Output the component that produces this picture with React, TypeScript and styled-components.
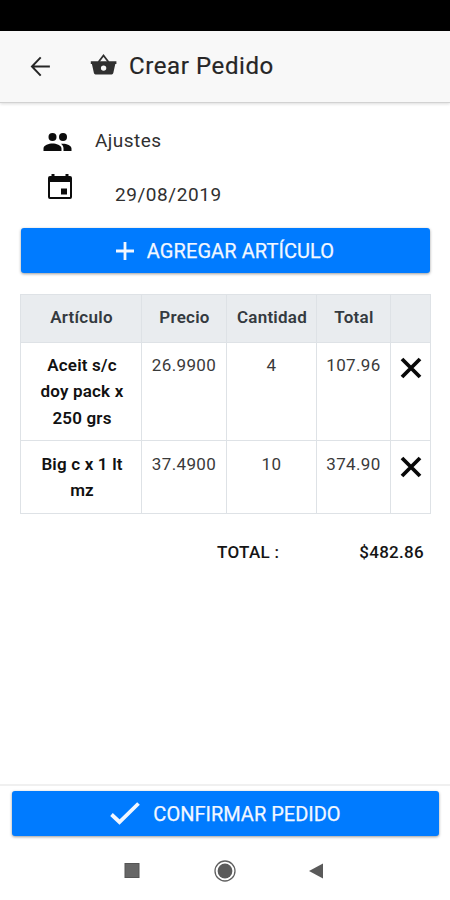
import React from "react";
import styled, { createGlobalStyle } from "styled-components";

const GlobalStyle = createGlobalStyle`
  *, *::before, *::after { box-sizing: border-box; }
  body { margin: 0; background: #fff; font-family: Roboto, "Liberation Sans", sans-serif; color: #1c1c1c; }
`;

const Screen = styled.div`
  display: flex;
  flex-direction: column;
  width: 450px;
  height: 900px;
  background: #fff;
  overflow: hidden;
`;

const StatusBar = styled.div`
  flex: none;
  height: 31px;
  background: #000;
`;

const Header = styled.header`
  flex: none;
  display: flex;
  align-items: center;
  height: 72px;
  padding: 0 0 1px 28px;
  background: #f8f8f8;
  border-bottom: 1px solid #d2d2d2;
  box-shadow: 0 1px 3px rgba(0, 0, 0, 0.14);
`;

const Title = styled.h1`
  margin: 0 0 0 11px;
  font-size: 24px;
  line-height: 30px;
  font-weight: 400;
  letter-spacing: 0.6px;
  color: #262626;
  -webkit-text-stroke: 0.2px #262626;
`;

const Icon = styled.svg<{ $gap?: number }>`
  display: block;
  flex: none;
  margin-left: ${(p) => p.$gap ?? 0}px;
`;

const Content = styled.main`
  flex: 1;
  padding: 22px 19px 0 20px;
`;

const Field = styled.div<{ $indent: number; $height: number }>`
  display: flex;
  align-items: flex-start;
  height: ${(p) => p.$height}px;
  padding-left: ${(p) => p.$indent}px;
`;

const FieldText = styled.span<{ $left: number; $top: number; $spacing: number }>`
  margin: ${(p) => p.$top}px 0 0 ${(p) => p.$left}px;
  font-size: 19px;
  line-height: 24px;
  letter-spacing: ${(p) => p.$spacing}px;
  color: #303030;
`;

const Button = styled.button`
  display: flex;
  align-items: center;
  justify-content: center;
  width: 100%;
  height: 45px;
  padding: 0;
  border: 0;
  border-radius: 3px;
  background: #007bff;
  color: #f2f7ff;
  font: 400 20px/24px Roboto, "Liberation Sans", sans-serif;
  -webkit-text-stroke: 0.25px #f2f7ff;
  box-shadow: 0 1px 3px rgba(0, 0, 0, 0.4);
`;

const AddButton = styled(Button)`
  width: 409px;
  margin-left: 1px;
  padding-right: 1px;
`;

const ButtonLabel = styled.span<{ $spacing: number }>`
  margin-left: 13px;
  letter-spacing: ${(p) => p.$spacing}px;
`;

const Table = styled.table`
  width: 411px;
  margin-top: 21px;
  table-layout: fixed;
  border-collapse: collapse;
  font-size: 17px;
  line-height: 26.4px;
  text-align: center;
`;

const Col = styled.col<{ $width: number }>`
  width: ${(p) => p.$width}px;
`;

const HeadCell = styled.th`
  height: 48px;
  padding: 0 0 2px 1px;
  border: 1px solid #dee2e6;
  background: #e9ecef;
  color: #343a40;
  font-weight: 600;
  letter-spacing: 0.25px;
`;

const Row = styled.tr<{ $height: number }>`
  height: ${(p) => p.$height}px;

  &:last-child > td {
    padding-top: 10px;
  }
`;

const Cell = styled.td`
  padding: 9px 0 0;
  border: 1px solid #dee2e6;
  vertical-align: top;
  letter-spacing: 0.35px;
  color: #3a3a3a;
`;

const NameCell = styled(Cell)`
  padding: 9px 11px 0 13px;
  color: #111;
  font-weight: 600;
  letter-spacing: 0.18px;
`;

const DeleteButton = styled.button`
  display: block;
  margin: 5px auto 0;
  padding: 0;
  border: 0;
  background: none;
`;

const Summary = styled.div`
  display: flex;
  justify-content: space-between;
  margin-top: 25px;
  padding: 0 7px 0 197px;
  font-size: 17px;
  line-height: 26px;
  font-weight: 500;
  color: #151515;
`;

const SummaryLabel = styled.span`
  letter-spacing: 0.3px;
`;

const Amount = styled.span`
  letter-spacing: 0.3px;
`;

const Footer = styled.footer`
  flex: none;
  height: 58px;
  padding: 5px 11px 0 12px;
  border-top: 2px solid #f0f0f0;
`;

const NavBar = styled.nav`
  flex: none;
  display: flex;
  justify-content: center;
  align-items: center;
  height: 58px;
  gap: 69px;
`;

const items = [
  { name: "Aceit s/c doy pack x 250 grs", price: "26.9900", qty: 4, total: "107.96", height: 98 },
  { name: "Big c x 1 lt mz", price: "37.4900", qty: 10, total: "374.90", height: 73 },
];

export default function App() {
  return (
    <>
      <GlobalStyle />
      <Screen>
        <StatusBar />
        <Header>
          <Icon width="25" height="25" viewBox="0 0 24 24" fill="none" stroke="#262626" strokeWidth="1.9">
            <path d="M21 12H4M12.2 3.2 3.8 12l8.4 8.8" />
          </Icon>
          <Icon $gap={37} width="28" height="26" viewBox="0 0 28 26">
            <path d="m8.5 9 5-6.5 5 6.5" fill="none" stroke="#303030" strokeWidth="1.8" />
            <path fill="#303030" fillRule="evenodd" d="M.8 8.3h25.600v2.800h-1.100l-2 9q-.3 1.300-1.600 1.300H5.500q-1.300 0-1.600-1.300l-2-9H.8zM13.600 12.400a2.700 2.700 0 1 0 0 5.400a2.700 2.700 0 1 0 0-5.400z" />
          </Icon>
          <Title>Crear Pedido</Title>
        </Header>
        <Content>
          <Field $indent={23} $height={49}>
            <Icon width="29" height="34" viewBox="0 0 29 34" fill="#0c0c0c">
              <circle cx="9.5" cy="12" r="4" />
              <circle cx="20" cy="12" r="4" />
              <path d="M.5 26v-2.500c0-3.300 5.500-5 9-5s9 1.700 9 5V26zM20.500 26v-2.500c0-2-1-3.500-2.500-4.700 4-.7 10.500 1 10.500 4.700V26z" />
            </Icon>
            <FieldText $left={23} $top={4} $spacing={0.45}>Ajustes</FieldText>
          </Field>
          <Field $indent={27} $height={54}>
            <Icon width="26" height="27" viewBox="0 0 26 27">
              <path fill="#0c0c0c" fillRule="evenodd" d="M4.500 0h3v2h11V0h3v2H23q2 0 2 2v19q0 2-2 2H3q-2 0-2-2V4q0-2 2-2h1.500zM3 8v15h20V8zM14 14.500h6v6h-6z" />
            </Icon>
            <FieldText $left={42} $top={9} $spacing={0.55}>29/08/2019</FieldText>
          </Field>
          <AddButton>
            <Icon width="18" height="18" viewBox="0 0 18 18" stroke="#f2f7ff" strokeWidth="2.8">
              <path d="M0 9h18M9 0v18" />
            </Icon>
            <ButtonLabel $spacing={0.08}>AGREGAR ARTÍCULO</ButtonLabel>
          </AddButton>
          <Table>
            <colgroup>
              <Col $width={121} />
              <Col $width={85} />
              <Col $width={90} />
              <Col $width={74} />
              <Col $width={40} />
            </colgroup>
            <thead>
              <tr>
                <HeadCell>Artículo</HeadCell>
                <HeadCell>Precio</HeadCell>
                <HeadCell>Cantidad</HeadCell>
                <HeadCell>Total</HeadCell>
                <HeadCell />
              </tr>
            </thead>
            <tbody>
              {items.map((item) => (
                <Row key={item.name} $height={item.height}>
                  <NameCell>{item.name}</NameCell>
                  <Cell>{item.price}</Cell>
                  <Cell>{item.qty}</Cell>
                  <Cell>{item.total}</Cell>
                  <Cell>
                    <DeleteButton aria-label="Eliminar">
                      <Icon width="22" height="22" viewBox="0 0 22 22" stroke="#080808" strokeWidth="3.8">
                        <path d="m2 2 18 18M20 2 2 20" />
                      </Icon>
                    </DeleteButton>
                  </Cell>
                </Row>
              ))}
            </tbody>
          </Table>
          <Summary>
            <SummaryLabel>TOTAL :</SummaryLabel>
            <Amount>$482.86</Amount>
          </Summary>
        </Content>
        <Footer>
          <Button>
            <Icon width="30" height="23" viewBox="0 0 30 23" fill="none" stroke="#f2f7ff" strokeWidth="3.8">
              <path d="m1.500 12.500 8 7.500L28.500 1.500" />
            </Icon>
            <ButtonLabel $spacing={0}>CONFIRMAR PEDIDO</ButtonLabel>
          </Button>
        </Footer>
        <NavBar>
          <Icon width="24" height="24" viewBox="0 0 24 24">
            <rect x="5" y="4.5" width="14" height="14" fill="#666" stroke="#555" />
          </Icon>
          <Icon width="24" height="24" viewBox="0 0 24 24">
            <circle cx="12" cy="12" r="10" fill="none" stroke="#606060" strokeWidth="1.3" />
            <circle cx="12" cy="12" r="7.4" fill="#5a5a5a" />
          </Icon>
          <Icon width="24" height="24" viewBox="0 0 24 24">
            <path d="M3 12 17 4.500v15z" fill="#5a5a5a" />
          </Icon>
        </NavBar>
      </Screen>
    </>
  );
}
